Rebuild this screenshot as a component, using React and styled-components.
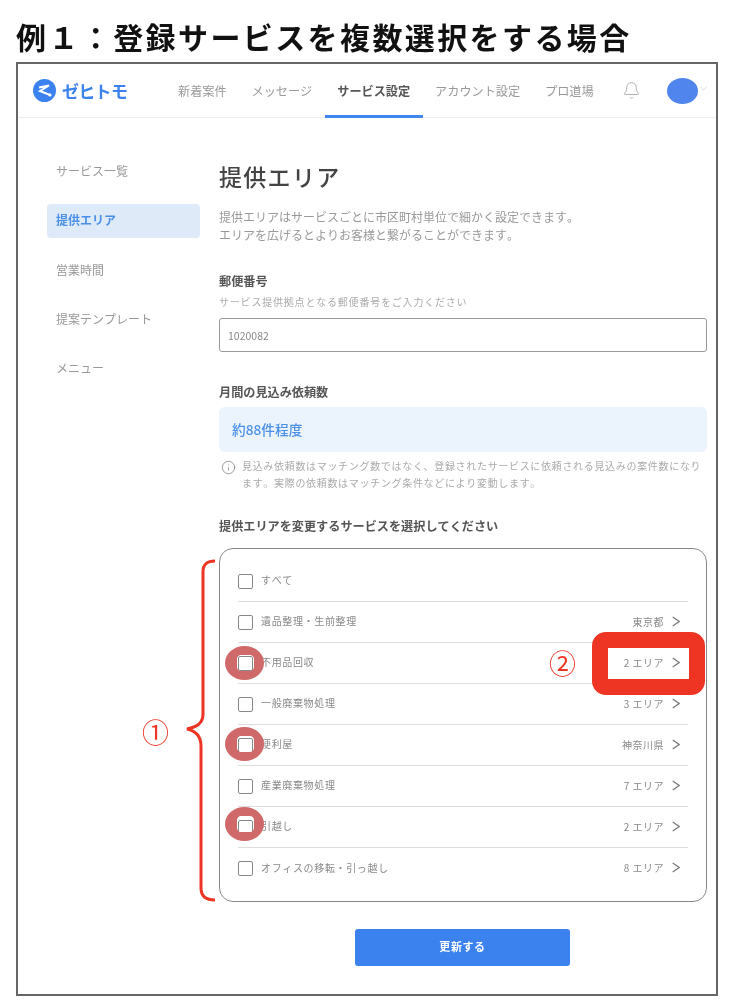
import React from "react";
import styled, { createGlobalStyle } from "styled-components";
import { Bell, ChevronDown, Info } from "lucide-react";

const GlobalStyle = createGlobalStyle`
  html, body {
    margin: 0;
    padding: 0;
    background: #fff;
  }
  body {
    font-family: "Noto Sans CJK JP", "Noto Sans", sans-serif;
    font-kerning: none;
  }
`;

const Page = styled.div`
  position: relative;
  width: 732px;
  height: 1006px;
  padding: 0 14px 0 16px;
  box-sizing: border-box;
  overflow: hidden;
  filter: blur(0.35px);
`;

const PageTitle = styled.h1`
  margin: 0;
  padding-top: 15px;
  height: 62px;
  box-sizing: border-box;
  font-size: 30px;
  line-height: 42px;
  font-weight: 700;
  color: #111;
  letter-spacing: 2.4px;
  white-space: nowrap;
`;

const Frame = styled.div`
  width: 702px;
  height: 934px;
  box-sizing: border-box;
  border: 2px solid #666;
`;

const Header = styled.header`
  display: flex;
  align-items: stretch;
  height: 54px;
  box-sizing: border-box;
  padding-left: 15px;
  border-bottom: 1px solid #eee;
`;

const Logo = styled.div`
  display: flex;
  align-items: center;
  gap: 6px;
  width: 145px;
  color: #3b82ee;
  font-size: 17px;
  font-weight: 700;
  letter-spacing: -0.7px;
`;

const Nav = styled.nav`
  display: flex;
  gap: 25px;
`;

const Tab = styled.a`
  position: relative;
  display: flex;
  align-items: center;
  padding-bottom: 1px;
  font-size: 12.15px;
  color: ${(p) => (p.$active ? "#555" : "#999")};
  font-weight: ${(p) => (p.$active ? 700 : 400)};
  white-space: nowrap;
  &::after {
    content: "";
    display: ${(p) => (p.$active ? "block" : "none")};
    position: absolute;
    left: -12px;
    right: -13px;
    bottom: -1px;
    height: 3px;
    background: #3f86ee;
  }
`;

const BellSlot = styled.div`
  display: flex;
  align-items: center;
  margin-left: 28px;
  color: #aaa;
`;

const Avatar = styled.div`
  align-self: center;
  width: 31px;
  height: 26px;
  margin-left: 26px;
  border-radius: 50%;
  background: #5185ee;
`;

const AvatarCaret = styled.div`
  display: flex;
  align-items: center;
  margin-top: -4px;
  color: #bbb;
`;

const Body = styled.div`
  display: flex;
`;

const Sidebar = styled.aside`
  display: flex;
  flex-direction: column;
  gap: 15.3px;
  width: 153px;
  margin: 37px 19px 0 29px;
`;

const SideItem = styled.div`
  height: 34px;
  box-sizing: border-box;
  padding: 0 0 3px 9px;
  display: flex;
  align-items: center;
  border-radius: 4px;
  font-size: 12px;
  background: ${(p) => (p.$active ? "#deeaf8" : "transparent")};
  color: ${(p) => (p.$active ? "#4a90e8" : "#999")};
  font-weight: ${(p) => (p.$active ? 700 : 400)};
`;

const Main = styled.main`
  width: 488px;
  padding-top: 41px;
`;

const Heading = styled.h2`
  margin: 0;
  font-size: 23px;
  line-height: 34px;
  font-weight: 500;
  letter-spacing: 1.3px;
  color: #444;
`;

const Lead = styled.p`
  margin: 15px 0 0;
  font-size: 12px;
  line-height: 18px;
  color: #999;
`;

const Label = styled.div`
  margin-top: ${(p) => p.$top}px;
  font-size: 12.15px;
  line-height: 18px;
  font-weight: 700;
  color: #555;
`;

const Hint = styled.div`
  margin-top: 4px;
  font-size: 10px;
  line-height: 16px;
  letter-spacing: 0.8px;
  color: #aaa;
`;

const Input = styled.div`
  margin-top: 8px;
  height: 34px;
  box-sizing: border-box;
  padding-left: 8px;
  display: flex;
  align-items: center;
  border: 1px solid #999;
  border-radius: 3px;
  font-size: 10.5px;
  color: #888;
`;

const Estimate = styled.div`
  margin-top: 6px;
  height: 45px;
  box-sizing: border-box;
  padding: 0 0 2px 13px;
  display: flex;
  align-items: center;
  border-radius: 6px;
  background: #ebf3fc;
  color: #4a90e8;
  font-size: 13.7px;
  font-weight: 500;
`;

const Note = styled.div`
  display: flex;
  margin-top: 5px;
  padding: 0 4px 0 2px;
  gap: 6px;
  color: #aaa;
  svg {
    flex: none;
    margin-top: 3px;
    color: #888;
  }
`;

const NoteText = styled.p`
  margin: 0;
  font-size: 10px;
  line-height: 17px;
  letter-spacing: 0.68px;
`;

const ServiceBox = styled.div`
  margin-top: 13px;
  height: 354px;
  box-sizing: border-box;
  padding: 12px 18px 0;
  border: 1px solid #888;
  border-radius: 14px;
`;

const Row = styled.div`
  display: flex;
  align-items: center;
  height: 41px;
  box-sizing: border-box;
  padding-right: 8px;
  border-bottom: ${(p) => (p.$last ? "none" : "1px solid #ddd")};
`;

const Checkbox = styled.span`
  flex: none;
  width: 15px;
  height: 15px;
  box-sizing: border-box;
  border: 1px solid #888;
  border-radius: 2px;
  background: #fff;
`;

const RowName = styled.span`
  margin: -3px 0 0 8px;
  font-size: 10px;
  letter-spacing: 0.65px;
  color: #888;
`;

const RowArea = styled.span`
  margin: -2px 0 0 auto;
  display: flex;
  align-items: center;
  gap: 8px;
  font-size: 10px;
  letter-spacing: 0.5px;
  color: #888;
`;

const Submit = styled.button`
  display: block;
  width: 215px;
  height: 37px;
  margin: 27px 0 0 136px;
  padding: 0 0 3px;
  border: none;
  border-radius: 3px;
  background: #3b82ee;
  color: #fff;
  font-family: inherit;
  font-size: 11px;
  font-weight: 700;
  letter-spacing: 0.6px;
`;

const Ring = styled.svg`
  position: absolute;
  left: 225px;
  top: ${(p) => p.$top}px;
`;

const CalloutBox = styled.div`
  position: absolute;
  left: 592px;
  top: 632px;
  width: 113px;
  height: 63px;
  box-sizing: border-box;
  border: 16px solid #ee3524;
  border-radius: 14px;
`;

const Marker = styled.span`
  position: absolute;
  left: ${(p) => p.$left}px;
  top: ${(p) => p.$top}px;
  font-size: 27px;
  line-height: 30px;
  color: #ee3524;
`;

const Brace = styled.svg`
  position: absolute;
  left: 186px;
  top: 558px;
`;

const rows = [
  { name: "すべて" },
  { name: "遺品整理・生前整理", area: "東京都" },
  { name: "不用品回収", area: "2 エリア" },
  { name: "一般廃棄物処理", area: "3 エリア" },
  { name: "便利屋", area: "神奈川県" },
  { name: "産業廃棄物処理", area: "7 エリア" },
  { name: "引越し", area: "2 エリア" },
  { name: "オフィスの移転・引っ越し", area: "8 エリア" },
];

const LogoMark = () => (
  <svg width="23" height="23" viewBox="0 0 23 23">
    <circle cx="11.5" cy="11.5" r="11.5" fill="#3b82ee" />
    <path d="M6 8.5 L16 6.5 L7 12 L17 16" fill="none" stroke="#fff" strokeWidth="2" />
    <circle cx="17" cy="16" r="1.6" fill="#fff" />
  </svg>
);

const RowArrow = () => (
  <svg width="8" height="11" viewBox="0 0 8 11" fill="none">
    <path d="M0.7 1 L7.2 5.5 L0.7 10" stroke="#777" strokeWidth="1.2" />
  </svg>
);

const CheckRing = ({ top }) => (
  <Ring $top={top} width="39" height="34" viewBox="0 0 39 34">
    <path
      fillRule="evenodd"
      fill="#d06a6a"
      d="M19.5 0 C30.3 0 39 7.6 39 17 C39 26.4 30.3 34 19.5 34 C8.7 34 0 26.4 0 17 C0 7.6 8.7 0 19.5 0 Z M16 9 C13.8 9 12 10.8 12 13 L12 21 C12 23.2 13.8 25 16 25 L25 25 C27.2 25 29 23.2 29 21 L29 13 C29 10.8 27.2 9 25 9 Z"
    />
  </Ring>
);

export default function App() {
  return (
    <Page>
      <GlobalStyle />
      <PageTitle>例１：登録サービスを複数選択をする場合</PageTitle>
      <Frame>
        <Header>
          <Logo>
            <LogoMark />
            ゼヒトモ
          </Logo>
          <Nav>
            <Tab>新着案件</Tab>
            <Tab>メッセージ</Tab>
            <Tab $active>サービス設定</Tab>
            <Tab>アカウント設定</Tab>
            <Tab>プロ道場</Tab>
          </Nav>
          <BellSlot>
            <Bell size={19} strokeWidth={1.2} />
          </BellSlot>
          <Avatar />
          <AvatarCaret>
            <ChevronDown size={11} strokeWidth={1.2} />
          </AvatarCaret>
        </Header>
        <Body>
          <Sidebar>
            <SideItem>サービス一覧</SideItem>
            <SideItem $active>提供エリア</SideItem>
            <SideItem>営業時間</SideItem>
            <SideItem>提案テンプレート</SideItem>
            <SideItem>メニュー</SideItem>
          </Sidebar>
          <Main>
            <Heading>提供エリア</Heading>
            <Lead>
              提供エリアはサービスごとに市区町村単位で細かく設定できます。
              <br />
              エリアを広げるとよりお客様と繋がることができます。
            </Lead>
            <Label $top={28}>郵便番号</Label>
            <Hint>サービス提供拠点となる郵便番号をご入力ください</Hint>
            <Input>1020082</Input>
            <Label $top={31}>月間の見込み依頼数</Label>
            <Estimate>約88件程度</Estimate>
            <Note>
              <Info size={15} strokeWidth={1.3} />
              <NoteText>
                見込み依頼数はマッチング数ではなく、登録されたサービスに依頼される見込みの案件数になります。実際の依頼数はマッチング条件などにより変動します。
              </NoteText>
            </Note>
            <Label $top={26}>提供エリアを変更するサービスを選択してください</Label>
            <ServiceBox>
              {rows.map((row, i) => (
                <Row key={row.name} $last={i === rows.length - 1}>
                  <Checkbox />
                  <RowName>{row.name}</RowName>
                  {row.area && (
                    <RowArea>
                      {row.area}
                      <RowArrow />
                    </RowArea>
                  )}
                </Row>
              ))}
            </ServiceBox>
            <Submit>更新する</Submit>
          </Main>
        </Body>
      </Frame>
      <CheckRing top={646} />
      <CheckRing top={727} />
      <CheckRing top={807} />
      <CalloutBox />
      <Marker $left={549} $top={648}>②</Marker>
      <Marker $left={142} $top={717}>①</Marker>
      <Brace width="32" height="346" viewBox="0 0 32 346" fill="none">
        <path
          d="M29 3 C21 3 17 6 17 14 L17 156 C17 166 10 169 1 171 C10 173 15 178 15 188 L15 330 C15 338 20 342 29 342"
          stroke="#ee3524"
          strokeWidth="3"
        />
      </Brace>
    </Page>
  );
}
